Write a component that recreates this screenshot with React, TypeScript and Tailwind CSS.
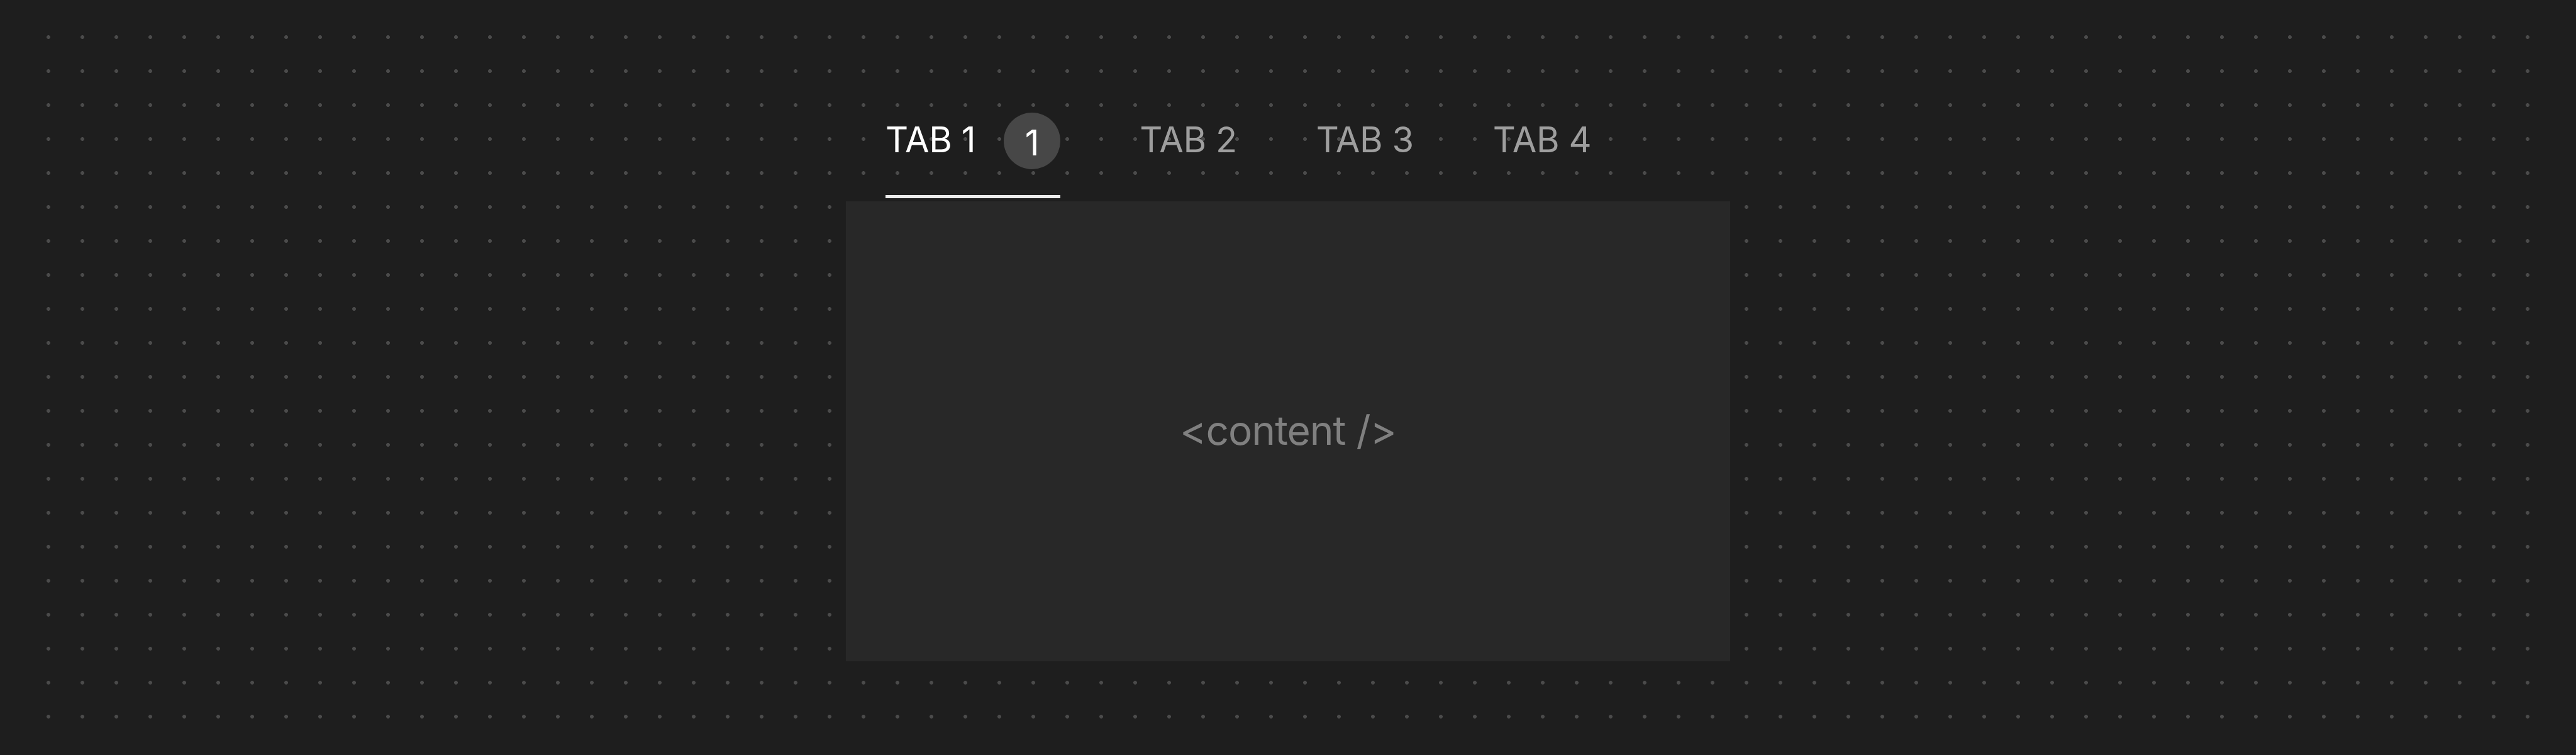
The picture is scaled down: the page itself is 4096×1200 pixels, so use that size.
import React from "react";

const tabs = ["TAB 1", "TAB 2", "TAB 3", "TAB 4"];

export default function App() {
  return (
    <div
      className="w-full h-[1200px] bg-[#1e1e1e] px-[50px] py-[32px]"
      style={{ fontFamily: "Inter, 'Noto Sans', sans-serif" }}
    >
      <div className="h-full [background-image:radial-gradient(circle,#4b4b4b_2.6px,transparent_3.2px)] [background-size:54px_54px] pt-[146px]">
        <div className="w-[1406px] mx-auto flex flex-col">
          <div className="flex flex-row pl-[63px] gap-[126px]">
            {tabs.map((t, i) => (
              <div key={t} className="flex flex-col">
                <div className="h-[90px] mt-[1px] flex items-center">
                  <span
                    className={
                      "text-[56px] leading-none tracking-[-0.4px] pb-[4px] " +
                      (i === 0 ? "text-white" : "text-[#9e9e9e]")
                    }
                  >
                    {t}
                  </span>
                  {i === 0 && (
                    <span className="ml-[45px] w-[90px] h-[90px] rounded-full bg-[#474747] text-white text-[56px] leading-none flex items-center justify-center pt-[5px]">
                      1
                    </span>
                  )}
                </div>
                <div
                  className={
                    "mt-[41px] h-[5px] " + (i === 0 ? "bg-[#ebebeb]" : "bg-transparent")
                  }
                />
              </div>
            ))}
          </div>
          <div className="mt-[5px] h-[731px] bg-[#282828] flex items-center justify-center">
            <span className="text-[64px] leading-none tracking-[-1px] text-[#808080] pb-[3px]">&lt;content /&gt;</span>
          </div>
        </div>
      </div>
    </div>
  );
}
